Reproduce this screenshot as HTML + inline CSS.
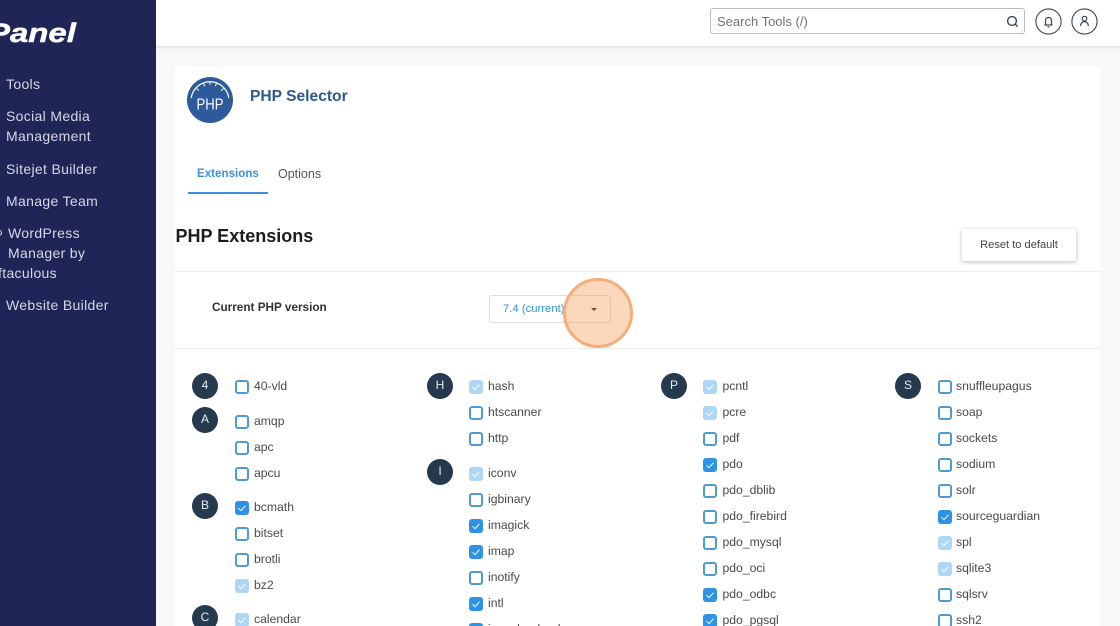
<!DOCTYPE html>
<html><head><meta charset="utf-8"><style>
*{box-sizing:border-box}
html,body{margin:0;padding:0;width:1120px;height:626px;overflow:hidden;background:#f8f8f8;font-family:"Liberation Sans",sans-serif;color:#444}
#wrap{position:relative;width:1120px;height:626px;overflow:hidden;background:#f8f8f8}
.a{position:absolute;white-space:nowrap}
#side{position:absolute;left:0;top:0;width:156px;height:626px;background:#1f2556;overflow:hidden}
.n{position:absolute;color:#d5d8e6;font-size:14px;line-height:20px;white-space:nowrap;letter-spacing:.33px}
.l{position:absolute;font-size:12.2px;line-height:16px;color:#4a4a4a;white-space:nowrap}
.c{position:absolute;width:14px;height:14px;border-radius:3px}
.u{border:2px solid #4f9ad0;background:#fff}
.k{background:#2e93e6}
.d{background:#aed6f6}
.c svg{position:absolute;left:0;top:0}
.b{position:absolute;width:26px;height:26px;border-radius:50%;background:#253a4f;color:#e8ecf0;font-size:12px;line-height:24px;text-align:center}
</style></head><body>
<div id="wrap">
<div id="side">
<div class="a" style="left:-12px;top:17px;color:#fff;font:italic bold 27px/32px 'Liberation Sans',sans-serif;transform:scaleX(1.22);transform-origin:0 0;-webkit-text-stroke:.5px #fff">Panel</div>
<div class="n" style="left:6px;top:74px">Tools</div>
<div class="n" style="left:6px;top:106px">Social Media<br>Management</div>
<div class="n" style="left:6px;top:159px">Sitejet Builder</div>
<div class="n" style="left:6px;top:191px">Manage Team</div>
<div class="n" style="left:8px;top:223px">WordPress<br>Manager by</div>
<div class="n" style="left:-2px;top:263px">ftaculous</div>
<div class="a" style="left:-4px;top:230px;width:6px;height:6px;border:1px solid #d5d8e6;border-radius:50%"></div>
<div class="n" style="left:6px;top:295px">Website Builder</div>
</div>
<div class="a" style="left:156px;top:0;width:964px;height:46px;background:#fff;box-shadow:0 1px 3px rgba(0,0,0,.13)"></div>
<div class="a" style="left:710px;top:8px;width:315px;height:26px;background:#fff;border:1px solid #b9bdc2;border-radius:3px;padding-left:6px;font-size:13px;line-height:25px;color:#6f7478">Search Tools (/)</div>
<svg class="a" style="left:1005px;top:14px" width="15" height="15" viewBox="0 0 15 15" fill="none" stroke="#3a4652" stroke-width="1.4"><circle cx="7" cy="7" r="4.4"/><path d="M10.2 10.2L12.6 12.6"/></svg>
<svg class="a" style="left:1035px;top:8px" width="27" height="27" viewBox="0 0 27 27" fill="none" stroke="#3a4652" stroke-width="1.1"><circle cx="13.5" cy="13.5" r="12.6"/><path d="M9.5 17h8M10.5 17v-4.5a3 3 0 0 1 6 0V17M12.5 19h2" stroke-width="1.2"/></svg>
<svg class="a" style="left:1071px;top:8px" width="27" height="27" viewBox="0 0 27 27" fill="none" stroke="#3a4652" stroke-width="1.1"><circle cx="13.5" cy="13.5" r="12.6"/><circle cx="13.5" cy="10.6" r="2.3" stroke-width="1.2"/><path d="M9.6 18c.3-2.8 1.8-4.4 3.9-4.4s3.6 1.6 3.9 4.4" stroke-width="1.2"/></svg>

<div class="a" style="left:175px;top:66px;width:925px;height:560px;background:#fff"></div>
<svg class="a" style="left:187px;top:77px" width="46" height="46" viewBox="0 0 46 46"><circle cx="23" cy="23" r="23" fill="#2d5a9a"/><path d="M4.2 21A19 19 0 0 1 41.8 21" fill="none" stroke="#fff" stroke-width="1.2"/><path d="M9.6 11.5l2.3 2.2M16.5 6.3l1.2 2.9M23 4.500v3.200M29.5 6.300l-1.2 2.900M36.400 11.500l-2.300 2.200" stroke="#fff" stroke-width="1"/><text x="23" y="32.5" text-anchor="middle" fill="#fff" font-family="Liberation Sans,sans-serif" font-size="15.5" textLength="27" lengthAdjust="spacingAndGlyphs">PHP</text></svg>
<div class="a" style="left:250px;top:87px;font-size:15.6px;line-height:20px;font-weight:bold;color:#2d5a8e">PHP Selector</div>
<div class="a" style="left:197px;top:166px;font-size:11.6px;line-height:16px;font-weight:bold;color:#3a91d8">Extensions</div>
<div class="a" style="left:278px;top:166px;font-size:12.5px;line-height:16px;color:#555">Options</div>
<div class="a" style="left:188px;top:192px;width:80px;height:2px;background:#3a91d8"></div>
<div class="a" style="left:175.5px;top:224px;font-size:18px;line-height:24px;font-weight:bold;color:#1c1c1c">PHP Extensions</div>
<div class="a" style="left:962px;top:229px;width:114px;height:32px;background:#fff;border-radius:2px;box-shadow:0 1px 5px rgba(0,0,0,.28);font-size:11.1px;line-height:32px;text-align:center;color:#444">Reset to default</div>
<div class="a" style="left:175px;top:271px;width:925px;height:1px;background:#eee"></div>
<div class="a" style="left:175px;top:348px;width:925px;height:1px;background:#eee"></div>
<div class="a" style="left:212px;top:300px;font-size:11.76px;line-height:16px;font-weight:bold;color:#333">Current PHP version</div>
<div class="a" style="left:489px;top:295px;width:122px;height:28px;border:1px solid #ddd;border-radius:3px;background:#fff;padding-left:13px;font:11.3px/26px 'Liberation Sans',sans-serif;color:#3a91d8">7.4 (current)</div>
<div class="a" style="left:563px;top:278px;width:70px;height:70px;border-radius:50%;background:rgba(250,150,80,.38);border:3px solid #f5ae78"></div>
<div class="a" style="left:591px;top:308px;width:0;height:0;border-left:3.5px solid transparent;border-right:3.5px solid transparent;border-top:3.5px solid #6b5040"></div>

<div class="b" style="left:192px;top:373px">4</div>
<div class="b" style="left:192px;top:407px">A</div>
<div class="b" style="left:192px;top:493px">B</div>
<div class="b" style="left:192px;top:605px">C</div>
<div class="b" style="left:427px;top:373px">H</div>
<div class="b" style="left:427px;top:459px">I</div>
<div class="b" style="left:661px;top:373px">P</div>
<div class="b" style="left:895px;top:373px">S</div>

<!-- column 1 -->
<div class="c u" style="left:235px;top:380px"></div><div class="l" style="left:254px;top:378px">40-vld</div>
<div class="c u" style="left:235px;top:415px"></div><div class="l" style="left:254px;top:413px">amqp</div>
<div class="c u" style="left:235px;top:441px"></div><div class="l" style="left:254px;top:439px">apc</div>
<div class="c u" style="left:235px;top:467px"></div><div class="l" style="left:254px;top:465px">apcu</div>
<div class="c k" style="left:235px;top:501px"><svg width="14" height="14" fill="none" stroke="#fff" stroke-width="1"><path d="M3.5 7.2l2.5 2.5 4.5-5"/></svg></div><div class="l" style="left:254px;top:499px">bcmath</div>
<div class="c u" style="left:235px;top:527px"></div><div class="l" style="left:254px;top:525px">bitset</div>
<div class="c u" style="left:235px;top:553px"></div><div class="l" style="left:254px;top:551px">brotli</div>
<div class="c d" style="left:235px;top:579px"><svg width="14" height="14" fill="none" stroke="#fff" stroke-width="1"><path d="M3.5 7.2l2.5 2.5 4.5-5"/></svg></div><div class="l" style="left:254px;top:577px">bz2</div>
<div class="c d" style="left:235px;top:613px"><svg width="14" height="14" fill="none" stroke="#fff" stroke-width="1"><path d="M3.5 7.2l2.5 2.5 4.5-5"/></svg></div><div class="l" style="left:254px;top:611px">calendar</div>

<!-- column 2 -->
<div class="c d" style="left:469px;top:380px"><svg width="14" height="14" fill="none" stroke="#fff" stroke-width="1"><path d="M3.5 7.2l2.5 2.5 4.5-5"/></svg></div><div class="l" style="left:488px;top:378px">hash</div>
<div class="c u" style="left:469px;top:406px"></div><div class="l" style="left:488px;top:404px">htscanner</div>
<div class="c u" style="left:469px;top:432px"></div><div class="l" style="left:488px;top:430px">http</div>
<div class="c d" style="left:469px;top:467px"><svg width="14" height="14" fill="none" stroke="#fff" stroke-width="1"><path d="M3.5 7.2l2.5 2.5 4.5-5"/></svg></div><div class="l" style="left:488px;top:465px">iconv</div>
<div class="c u" style="left:469px;top:493px"></div><div class="l" style="left:488px;top:491px">igbinary</div>
<div class="c k" style="left:469px;top:519px"><svg width="14" height="14" fill="none" stroke="#fff" stroke-width="1"><path d="M3.5 7.2l2.5 2.5 4.5-5"/></svg></div><div class="l" style="left:488px;top:517px">imagick</div>
<div class="c k" style="left:469px;top:545px"><svg width="14" height="14" fill="none" stroke="#fff" stroke-width="1"><path d="M3.5 7.2l2.5 2.5 4.5-5"/></svg></div><div class="l" style="left:488px;top:543px">imap</div>
<div class="c u" style="left:469px;top:571px"></div><div class="l" style="left:488px;top:569px">inotify</div>
<div class="c k" style="left:469px;top:597px"><svg width="14" height="14" fill="none" stroke="#fff" stroke-width="1"><path d="M3.5 7.2l2.5 2.5 4.5-5"/></svg></div><div class="l" style="left:488px;top:595px">intl</div>
<div class="c k" style="left:469px;top:623px"></div><div class="l" style="left:488px;top:621px">ioncube_loader</div>

<!-- column 3 -->
<div class="c d" style="left:703px;top:380px"><svg width="14" height="14" fill="none" stroke="#fff" stroke-width="1"><path d="M3.5 7.2l2.5 2.5 4.5-5"/></svg></div><div class="l" style="left:722.5px;top:378px">pcntl</div>
<div class="c d" style="left:703px;top:406px"><svg width="14" height="14" fill="none" stroke="#fff" stroke-width="1"><path d="M3.5 7.2l2.5 2.5 4.5-5"/></svg></div><div class="l" style="left:722.5px;top:404px">pcre</div>
<div class="c u" style="left:703px;top:432px"></div><div class="l" style="left:722.5px;top:430px">pdf</div>
<div class="c k" style="left:703px;top:458px"><svg width="14" height="14" fill="none" stroke="#fff" stroke-width="1"><path d="M3.5 7.2l2.5 2.5 4.5-5"/></svg></div><div class="l" style="left:722.5px;top:456px">pdo</div>
<div class="c u" style="left:703px;top:484px"></div><div class="l" style="left:722.5px;top:482px">pdo_dblib</div>
<div class="c u" style="left:703px;top:510px"></div><div class="l" style="left:722.5px;top:508px">pdo_firebird</div>
<div class="c u" style="left:703px;top:536px"></div><div class="l" style="left:722.5px;top:534px">pdo_mysql</div>
<div class="c u" style="left:703px;top:562px"></div><div class="l" style="left:722.5px;top:560px">pdo_oci</div>
<div class="c k" style="left:703px;top:588px"><svg width="14" height="14" fill="none" stroke="#fff" stroke-width="1"><path d="M3.5 7.2l2.5 2.5 4.5-5"/></svg></div><div class="l" style="left:722.5px;top:586px">pdo_odbc</div>
<div class="c k" style="left:703px;top:614px"><svg width="14" height="14" fill="none" stroke="#fff" stroke-width="1"><path d="M3.5 7.2l2.5 2.5 4.5-5"/></svg></div><div class="l" style="left:722.5px;top:612px">pdo_pgsql</div>

<!-- column 4 -->
<div class="c u" style="left:937.5px;top:380px"></div><div class="l" style="left:956px;top:378px">snuffleupagus</div>
<div class="c u" style="left:937.5px;top:406px"></div><div class="l" style="left:956px;top:404px">soap</div>
<div class="c u" style="left:937.5px;top:432px"></div><div class="l" style="left:956px;top:430px">sockets</div>
<div class="c u" style="left:937.5px;top:458px"></div><div class="l" style="left:956px;top:456px">sodium</div>
<div class="c u" style="left:937.5px;top:484px"></div><div class="l" style="left:956px;top:482px">solr</div>
<div class="c k" style="left:937.5px;top:510px"><svg width="14" height="14" fill="none" stroke="#fff" stroke-width="1"><path d="M3.5 7.2l2.5 2.5 4.5-5"/></svg></div><div class="l" style="left:956px;top:508px">sourceguardian</div>
<div class="c d" style="left:937.5px;top:536px"><svg width="14" height="14" fill="none" stroke="#fff" stroke-width="1"><path d="M3.5 7.2l2.5 2.5 4.5-5"/></svg></div><div class="l" style="left:956px;top:534px">spl</div>
<div class="c d" style="left:937.5px;top:562px"><svg width="14" height="14" fill="none" stroke="#fff" stroke-width="1"><path d="M3.5 7.2l2.5 2.5 4.5-5"/></svg></div><div class="l" style="left:956px;top:560px">sqlite3</div>
<div class="c u" style="left:937.5px;top:588px"></div><div class="l" style="left:956px;top:586px">sqlsrv</div>
<div class="c u" style="left:937.5px;top:614px"></div><div class="l" style="left:956px;top:612px">ssh2</div>
</div>
</body></html>
